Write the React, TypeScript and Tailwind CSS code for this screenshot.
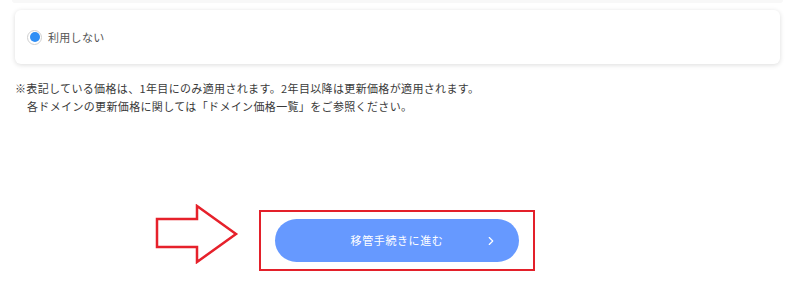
import { ChevronRight } from "lucide-react";

const font = { fontFamily: '"Noto Sans CJK JP", "Noto Sans", sans-serif' };

function RadioNone() {
  return (
    <label className="flex items-center gap-[6px] cursor-pointer">
      <span className="flex h-[15px] w-[15px] items-center justify-center rounded-full border border-[#cfcfcf] bg-white">
        <span className="h-[10px] w-[10px] rounded-full bg-[#2e8ef5]" />
      </span>
      <span className="text-[11px] tracking-[0.3px] text-[#555]">利用しない</span>
    </label>
  );
}

function PointArrow() {
  return (
    <svg width="84" height="60" viewBox="0 0 84 60" className="shrink-0">
      <polygon
        points="2,15 42,15 42,2 81,30 42,58 42,43 2,43"
        fill="white"
        stroke="#e6212b"
        strokeWidth="2.5"
        strokeLinejoin="miter"
      />
    </svg>
  );
}

export default function App() {
  return (
    <div className="relative h-[284px] w-[800px] overflow-hidden bg-white" style={font}>
      <div className="ml-[12px] mr-[17px] h-[3px] rounded-b-md bg-[#f8f8f8]" />
      <div className="ml-[15px] mr-[20px] mt-[7px] flex h-[54px] items-center rounded-md bg-white pl-[12px] shadow-[0_1px_5px_rgba(0,0,0,0.14)]">
        <RadioNone />
      </div>

      <div className="mt-[15px] pl-[15px] text-[11px] leading-[18px] tracking-[0.35px] text-[#3a3a3a]">
        <p>※表記している価格は、1年目にのみ適用されます。2年目以降は更新価格が適用されます。</p>
        <p className="pl-[12px]">各ドメインの更新価格に関しては「ドメイン価格一覧」をご参照ください。</p>
      </div>

      <div className="mt-[89px] flex items-start gap-[20px] pl-[155px]">
        <PointArrow />
        <div className="mt-[6px] border-2 border-[#e3202a] px-[14px] py-[7px]">
          <button className="relative flex h-[43px] w-[244px] items-center justify-center rounded-full bg-[#6699ff] text-[11px] tracking-[0.6px] text-white">
            移管手続きに進む
            <ChevronRight className="absolute right-[21px] top-1/2 h-[14px] w-[14px] -translate-y-1/2" strokeWidth={2} />
          </button>
        </div>
      </div>
    </div>
  );
}
